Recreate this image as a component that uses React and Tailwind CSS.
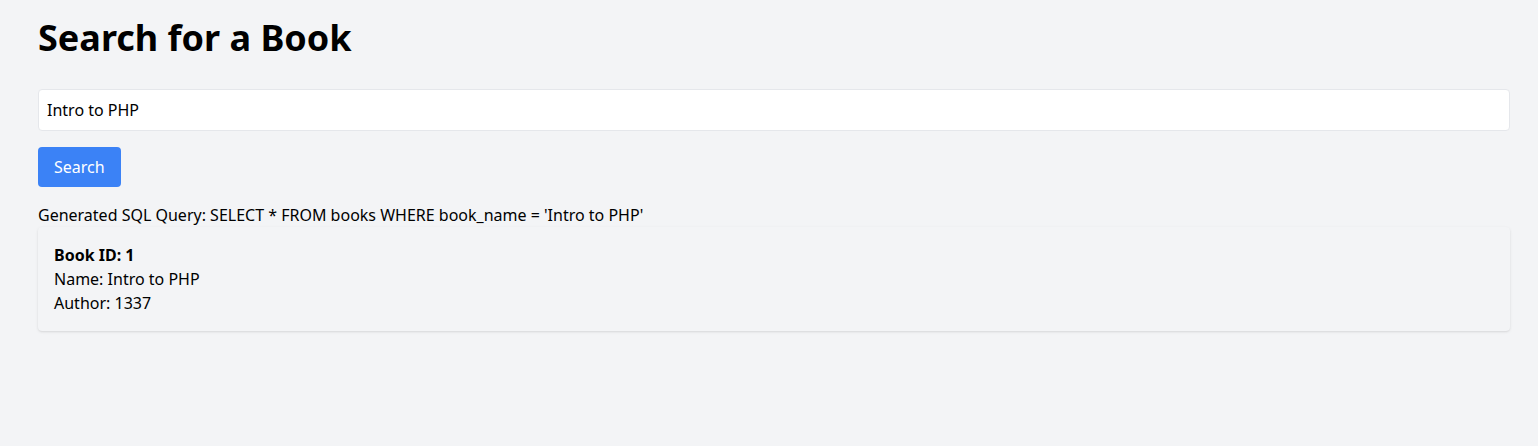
export default function App() {
  return (
    <div
      className="min-h-[446px] bg-[#f3f4f6] pt-[18px] pl-[38px] pr-[28px] text-black"
      style={{ fontFamily: '"Noto Sans", sans-serif' }}
    >
      <h1 className="text-4xl font-bold mb-[31px]">Search for a Book</h1>

      <form onSubmit={(e) => e.preventDefault()}>
        <input
          type="text"
          defaultValue="Intro to PHP"
          className="block w-full p-2 border border-[#e5e7eb] rounded bg-white text-base outline-none"
        />
        <button
          type="submit"
          className="mt-4 px-4 py-2 bg-[#3b82f6] text-white rounded"
        >
          Search
        </button>
      </form>

      <p className="mt-4">Generated SQL Query: SELECT * FROM books WHERE book_name = 'Intro to PHP'</p>

      <div className="p-4 rounded shadow bg-[#f3f4f6]">
        <p className="font-bold">Book ID: 1</p>
        <p>Name: Intro to PHP</p>
        <p>Author: 1337</p>
      </div>
    </div>
  );
}
